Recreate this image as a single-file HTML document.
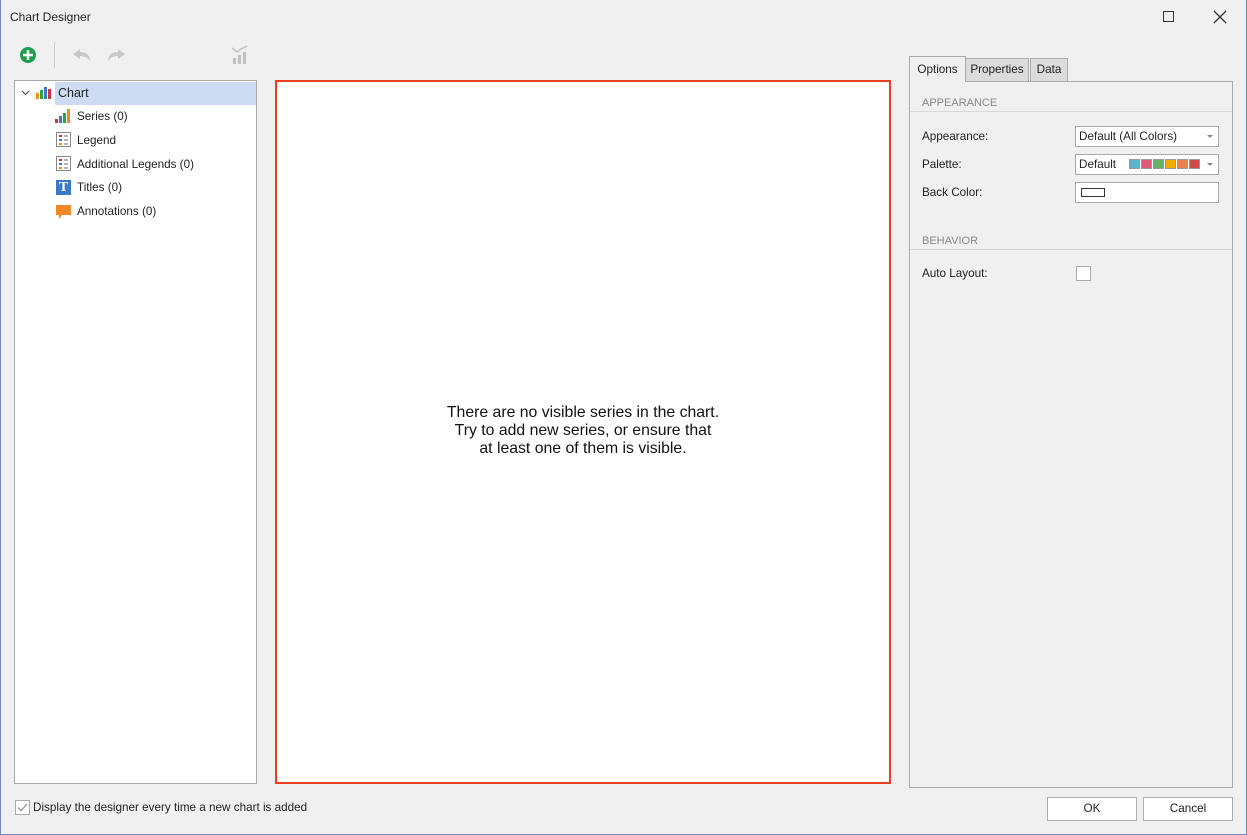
<!DOCTYPE html>
<html><head><style>
*{box-sizing:border-box;margin:0;padding:0}
body{width:1247px;height:835px;background:#f0f0f0;font-family:"Liberation Sans",sans-serif;font-size:11.7px;color:#222;position:relative;overflow:hidden}
.win{position:absolute;left:0;top:0;width:1247px;height:835px;border:1px solid #6a8cc0;border-top:none}
.a{position:absolute}
.tree div.it{position:absolute;left:62px;height:20px;line-height:20px}
.lbl{position:absolute;left:922px}
.box{position:absolute;left:1075px;width:144px;height:21px;background:#fff;border:1px solid #aaa;padding-left:3px;line-height:19px}
.arr{position:absolute;right:5px;top:8px;width:0;height:0;border-left:3px solid transparent;border-right:3px solid transparent;border-top:3px solid #888}
.btn{position:absolute;top:797px;width:90px;height:24px;border:1px solid #adadad;background:#fff;text-align:center;line-height:22px}
.sw{display:inline-block;width:11px;height:10px;margin-right:1px;vertical-align:-1px;border:1px solid #999}
</style></head><body><div class="win"></div>
<div class="a" style="left:10px;top:10px;font-size:12px">Chart Designer</div>
<div class="a" style="left:1163px;top:11px;width:11px;height:11px;border:1px solid #333"></div>
<svg class="a" style="left:1213px;top:10px" width="14" height="14"><path d="M1 1L13 13M13 1L1 13" stroke="#333" stroke-width="1.3"/></svg>
<svg class="a" style="left:19px;top:46px" width="18" height="18"><circle cx="9" cy="9" r="8" fill="#1e9e4a"/><path d="M9 4v10M4 9h10" stroke="#fff" stroke-width="2.5"/></svg>
<div class="a" style="left:54px;top:42px;width:1px;height:26px;background:#ccc"></div>
<svg class="a" style="left:72px;top:48px" width="20" height="14"><path d="M1 6L8 1v3c6 0 10 3 10 9c-2-3-5-5-10-5v3z" fill="#c8c8c8"/></svg>
<svg class="a" style="left:106px;top:48px" width="20" height="14"><path d="M19 6L12 1v3c-6 0-10 3-10 9c2-3 5-5 10-5v3z" fill="#c8c8c8"/></svg>
<svg class="a" style="left:231px;top:45px" width="18" height="20"><rect x="2" y="13" width="3" height="6" fill="#c0c0c0"/><rect x="7" y="10" width="3" height="9" fill="#c0c0c0"/><rect x="12" y="7" width="3" height="12" fill="#c0c0c0"/><path d="M1 3l5 4l4-3l6 -3" stroke="#c0c0c0" fill="none" stroke-width="1.5"/></svg>
<div class="a tree" style="left:14px;top:80px;width:243px;height:704px;background:#fff;border:1px solid #aaa">
<svg class="a" style="left:6px;top:9px" width="9" height="6"><path d="M1 1l3.5 3.5L8 1" stroke="#444" fill="none"/></svg>
<svg class="a" style="left:21px;top:4px" width="16" height="14"><rect x="0" y="8" width="3" height="6" fill="#f08a24"/><rect x="4" y="5" width="3" height="9" fill="#2ea04a"/><rect x="8" y="2" width="3" height="12" fill="#3a78c8"/><rect x="12" y="4" width="3" height="10" fill="#d3303a"/></svg>
<div class="a" style="left:40px;top:1px;width:201px;height:23px;background:#cddcf2;line-height:23px;padding-left:3px;font-size:12.5px">Chart</div>
<svg class="a" style="left:40px;top:28px" width="16" height="14"><rect x="0" y="10" width="3" height="4" fill="#d3303a"/><rect x="4" y="7" width="3" height="7" fill="#3a78c8"/><rect x="8" y="4" width="3" height="10" fill="#2ea04a"/><rect x="12" y="0" width="3" height="14" fill="#f08a24"/></svg>
<div class="it" style="top:26px">Series (0)</div>
<svg class="a" style="left:41px;top:51px" width="15" height="15"><rect x=".5" y=".5" width="14" height="14" fill="#fff" stroke="#888"/><rect x="3" y="3" width="3" height="2" fill="#d3303a"/><rect x="3" y="7" width="3" height="2" fill="#3a78c8"/><rect x="3" y="11" width="3" height="2" fill="#f08a24"/><path d="M8 4h4M8 8h4M8 12h4" stroke="#666"/></svg>
<div class="it" style="top:50px">Legend</div>
<svg class="a" style="left:41px;top:75px" width="15" height="15"><rect x=".5" y=".5" width="14" height="14" fill="#fff" stroke="#888"/><rect x="3" y="3" width="3" height="2" fill="#d3303a"/><rect x="3" y="7" width="3" height="2" fill="#3a78c8"/><rect x="3" y="11" width="3" height="2" fill="#f08a24"/><path d="M8 4h4M8 8h4M8 12h4" stroke="#666"/></svg>
<div class="it" style="top:74px">Additional Legends (0)</div>
<div class="a" style="left:41px;top:99px;width:15px;height:15px;background:#3a78c8;color:#fff;font-family:'Liberation Serif',serif;font-weight:bold;font-size:14px;text-align:center;line-height:15px">T</div>
<div class="it" style="top:97px">Titles (0)</div>
<svg class="a" style="left:41px;top:124px" width="15" height="15"><path d="M0 0h15v10H6l-3 4v-4H0z" fill="#f08a24"/></svg>
<div class="it" style="top:121px">Annotations (0)</div>
</div>
<div class="a" style="left:275px;top:80px;width:616px;height:704px;background:#fff;border:2px solid #e8401c"></div>
<div class="a" style="left:275px;top:404px;width:616px;text-align:center;font-size:15.8px;line-height:18px;color:#111">There are no visible series in the chart.<br>Try to add new series, or ensure that<br>at least one of them is visible.</div>
<div class="a" style="left:909px;top:81px;width:324px;height:707px;border:1px solid #aaa"></div>
<div class="a" style="left:965px;top:58px;width:64px;height:24px;border:1px solid #aaa;background:#dcdcdc;text-align:center;line-height:22px">Properties</div>
<div class="a" style="left:1030px;top:58px;width:38px;height:24px;border:1px solid #aaa;background:#dcdcdc;text-align:center;line-height:22px">Data</div>
<div class="a" style="left:909px;top:56px;width:57px;height:26px;border:1px solid #aaa;border-bottom:none;background:#f0f0f0;text-align:center;line-height:26px">Options</div>
<div class="a" style="left:922px;top:97px;font-size:11px;color:#888">APPEARANCE</div>
<div class="a" style="left:910px;top:111px;width:322px;height:1px;background:#d8d8d8"></div>
<div class="lbl" style="top:130px">Appearance:</div>
<div class="box" style="top:126px">Default (All Colors)<span class="arr"></span></div>
<div class="lbl" style="top:158px">Palette:</div>
<div class="box" style="top:154px">Default &nbsp;&nbsp;&nbsp;<span class="sw" style="background:#5ab4d0"></span><span class="sw" style="background:#e05a78"></span><span class="sw" style="background:#62b46a"></span><span class="sw" style="background:#f2a900"></span><span class="sw" style="background:#e8844a"></span><span class="sw" style="background:#d04848"></span><span class="arr"></span></div>
<div class="lbl" style="top:186px">Back Color:</div>
<div class="box" style="top:182px"><span class="a" style="left:5px;top:5px;width:24px;height:9px;border:1px solid #333"></span></div>
<div class="a" style="left:922px;top:235px;font-size:11px;color:#888">BEHAVIOR</div>
<div class="a" style="left:910px;top:249px;width:322px;height:1px;background:#d8d8d8"></div>
<div class="lbl" style="top:267px">Auto Layout:</div>
<div class="a" style="left:1076px;top:266px;width:15px;height:15px;background:#fff;border:1px solid #aaa"></div>
<div class="a" style="left:15px;top:800px;width:15px;height:15px;background:#fff;border:1px solid #aaa"></div>
<svg class="a" style="left:17px;top:803px" width="11" height="9"><path d="M1 4.5l3 3L10 1" stroke="#999" fill="none" stroke-width="1.3"/></svg>
<div class="a" style="left:33px;top:801px">Display the designer every time a new chart is added</div>
<div class="btn" style="left:1047px">OK</div>
<div class="btn" style="left:1143px">Cancel</div>
</body></html>
